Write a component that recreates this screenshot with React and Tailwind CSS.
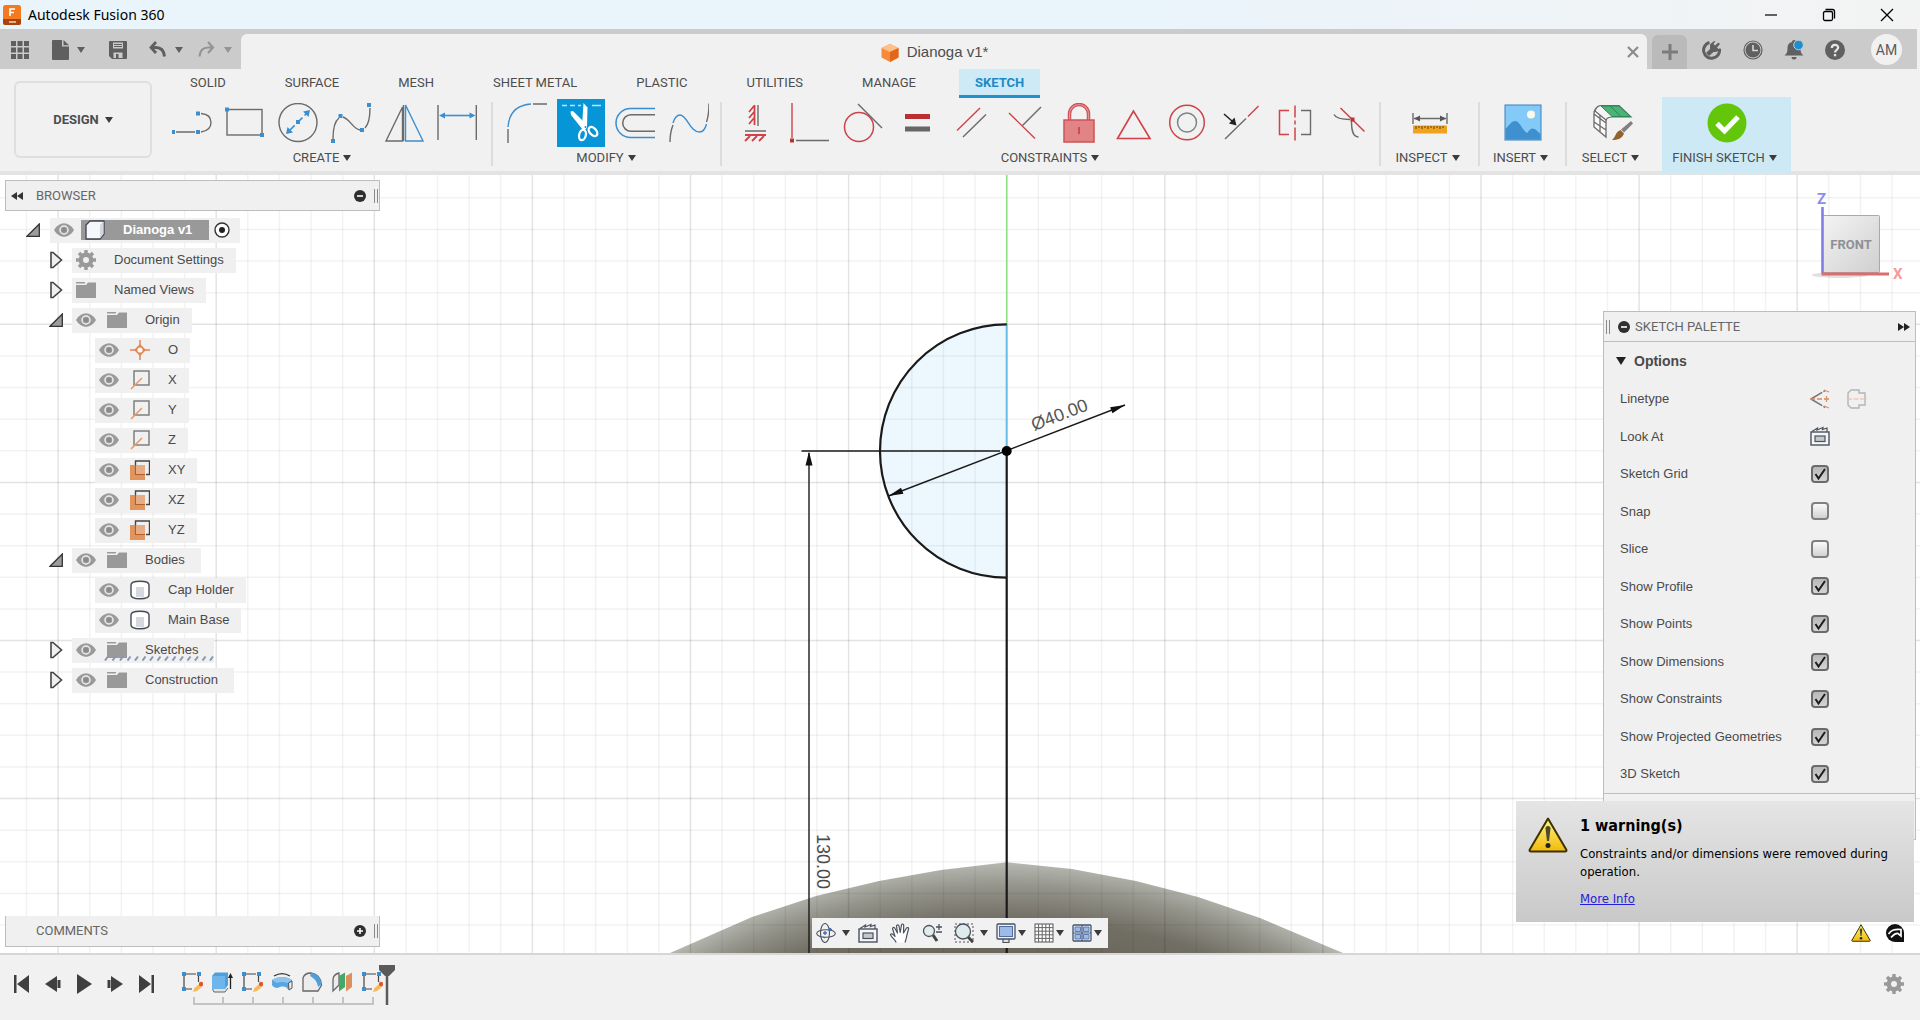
import { useState } from 'react'

const BLUE = '#3b8fd0'
const GREY = '#6b6b6b'
const RED = '#cf4248'

function Caret({ className = 'text-[#3c3c3c]' }) {
  return (
    <svg className={`w-2 h-1.5 shrink-0 ${className}`} viewBox="0 0 8 6" fill="currentColor" aria-hidden="true">
      <path d="M0 0h8L4 6z" />
    </svg>
  )
}

function Icon({ size = 'w-10 h-10', box = '0 0 40 40', children }) {
  return (
    <svg className={`${size} shrink-0`} viewBox={box} fill="none" aria-hidden="true">
      {children}
    </svg>
  )
}

function Dots({ points, size = 4 }) {
  return points.map(([x, y]) => (
    <rect key={`${x}-${y}`} x={x - size / 2} y={y - size / 2} width={size} height={size} fill={BLUE} />
  ))
}

// ========================
//  Ribbon tools
// ========================

const CREATE_TOOLS = [
  {
    name: 'Line',
    icon: (
      <>
        <path d="M4 29h19M29 29c7-1 10-5 10-9.500S36 11 29 10.500" stroke={GREY} strokeWidth="1.400" />
        <Dots points={[[1, 29], [26, 29], [26, 10.5]]} />
      </>
    ),
  },
  {
    name: 'Rectangle',
    icon: (
      <>
        <rect x="2" y="6.500" width="35" height="25.500" stroke={GREY} strokeWidth="1.400" />
        <Dots points={[[2, 6.5], [37, 32]]} />
      </>
    ),
  },
  {
    name: 'Circle',
    icon: (
      <>
        <circle cx="20" cy="19.500" r="19" stroke={GREY} strokeWidth="1.400" />
        <path d="M11 28L29 10" stroke={BLUE} strokeWidth="1.600" strokeDasharray="8 3" />
        <path d="M8 31l1.500-7 5.500 5.500zM32 7l-1.500 7-5.500-5.500z" fill={BLUE} />
        <Dots points={[[20, 19]]} />
      </>
    ),
  },
  {
    name: 'Spline',
    icon: (
      <>
        <path d="M2 36c0-10 2-18 6-21M12 14c8 3 9 11 17 13M34 25c4-4 5-12 5-20" stroke={GREY} strokeWidth="1.400" />
        <Dots points={[[2, 38], [9.5, 13], [31, 27], [38, 2]]} />
      </>
    ),
  },
  {
    name: 'Mirror',
    icon: (
      <>
        <path d="M2 38L18.500 4v34zM19.500 2v36" stroke={GREY} strokeWidth="1.400" />
        <path d="M21.500 2v36H39z" stroke={BLUE} strokeWidth="1.400" />
      </>
    ),
  },
  {
    name: 'Sketch Dimension',
    icon: (
      <>
        <path d="M1 2v35M39.300 2v35" stroke={GREY} strokeWidth="1.400" />
        <path d="M5 12.500h30" stroke={BLUE} strokeWidth="1.600" />
        <path d="M2 12.500l6-3v6zM38.500 12.500l-6-3v6z" fill={BLUE} />
      </>
    ),
  },
]

const MODIFY_TOOLS = [
  {
    name: 'Fillet',
    icon: (
      <>
        <path d="M1 26v14M26 1h14" stroke={GREY} strokeWidth="1.400" />
        <path d="M1 24C2 10 10 2 24 1" stroke={BLUE} strokeWidth="1.400" />
      </>
    ),
  },
  {
    name: 'Trim',
    active: true,
    icon: (
      <>
        <path d="M1 2.500h5M9 2.500h5M17 2.500h3M31 2.500h10" stroke="#bfe3f7" strokeWidth="1.400" />
        <path d="M9.500 8.500l2.500-.5 14 14-1 4-3 1L10 12z" fill="#fff" />
        <path d="M22.500 0l4 4.500-.5 20-2.500 2-2.500-3z" fill="#fff" />
        <ellipse cx="21.500" cy="32" rx="3.300" ry="5.300" transform="rotate(14 21.500 32)" stroke="#fff" strokeWidth="2.300" />
        <ellipse cx="32" cy="28.500" rx="3.300" ry="5.300" transform="rotate(-42 32 28.500)" stroke="#fff" strokeWidth="2.300" />
        <circle cx="24.500" cy="24" r="1" fill="#0696d7" />
      </>
    ),
  },
  {
    name: 'Offset',
    icon: (
      <>
        <path d="M40 5.500H15.500a14.500 14.500 0 000 29H40" stroke={BLUE} strokeWidth="1.500" />
        <path d="M40 11.700H16a8.300 8.300 0 000 16.600H40" stroke={GREY} strokeWidth="1.500" />
      </>
    ),
  },
  {
    name: 'Blend Curve',
    icon: (
      <>
        <path d="M1 39c0-6 1-12 3-17M37.500 19c2-6 2.500-12 2.500-18.500" stroke={GREY} strokeWidth="1.400" />
        <path d="M4 20c1.500-5 4-8 7-8 7 0 10 17 19.500 17 3.500 0 6-4 7-8" stroke={BLUE} strokeWidth="1.400" />
      </>
    ),
  },
]

const CONSTRAINT_TOOLS = [
  {
    name: 'Horizontal/Vertical',
    icon: (
      <>
        <path d="M19.500 2v20M14 9l5-6M14 15l5-6M14 21l5-6M10 32h21M10 38l5-5M17 38l5-5M24 38l5-5" stroke={RED} strokeWidth="1.800" />
        <path d="M23 2v21M10 28h21" stroke={GREY} strokeWidth="1.400" />
      </>
    ),
  },
  {
    name: 'Coincident',
    icon: (
      <>
        <path d="M3 0v35" stroke={RED} strokeWidth="1.400" />
        <path d="M7 37.500h34" stroke={GREY} strokeWidth="1.400" />
        <rect x="1" y="35.500" width="4" height="4" fill="#b8343a" />
      </>
    ),
  },
  {
    name: 'Tangent',
    icon: (
      <>
        <circle cx="16" cy="24" r="14.500" stroke={RED} strokeWidth="1.500" />
        <path d="M15 1l24 24" stroke={GREY} strokeWidth="1.400" />
      </>
    ),
  },
  {
    name: 'Equal',
    icon: (
      <>
        <path d="M8 13.500h25" stroke="#b92f34" strokeWidth="5" />
        <path d="M8 26h25" stroke="#666" strokeWidth="5" />
      </>
    ),
  },
  {
    name: 'Parallel',
    icon: (
      <>
        <path d="M6 27.500L29 5" stroke={RED} strokeWidth="1.400" />
        <path d="M12 34l23-22.500" stroke={GREY} strokeWidth="1.400" />
      </>
    ),
  },
  {
    name: 'Perpendicular',
    icon: (
      <>
        <path d="M4 10l26 25.500" stroke={RED} strokeWidth="1.400" />
        <path d="M17.500 22.500L36 4" stroke={GREY} strokeWidth="1.400" />
      </>
    ),
  },
  {
    name: 'Fix/Unfix',
    icon: (
      <>
        <path d="M10.500 17V11a9.500 9.500 0 0119 0v6" stroke="#cf5156" strokeWidth="3.500" />
        <path d="M10.500 17V11a9.500 9.500 0 0119 0v6" stroke="#e59496" strokeWidth="1.200" />
        <rect x="5" y="17" width="30" height="22" fill="#e28486" stroke="#cf5156" strokeWidth="1.500" />
        <path d="M20 24v7" stroke="#b8343a" strokeWidth="1.300" />
      </>
    ),
  },
  {
    name: 'Midpoint',
    icon: <path d="M20.500 8L4.500 35.500h32.500z" stroke={RED} strokeWidth="1.600" />,
  },
  {
    name: 'Concentric',
    icon: (
      <>
        <circle cx="20" cy="19.500" r="17.300" stroke={RED} strokeWidth="1.500" />
        <circle cx="20" cy="19.500" r="9.500" stroke="#7c8583" strokeWidth="1.500" />
      </>
    ),
  },
  {
    name: 'Collinear',
    icon: (
      <>
        <path d="M4 36l21-20.500" stroke={GREY} strokeWidth="1.400" />
        <path d="M27 13.500L37.500 3" stroke={RED} strokeWidth="1.400" />
        <path d="M3 11l8 7" stroke="#222" strokeWidth="1.500" />
        <path d="M15.500 22.500l-7.500-2 5.500-6z" fill="#222" />
      </>
    ),
  },
  {
    name: 'Symmetry',
    icon: (
      <>
        <path d="M14 7.500H4.500v24H14M20 2.500v12M20 17.500v4M20 24.500v13" stroke={RED} strokeWidth="1.500" />
        <path d="M26 7.500h9.500v24H26" stroke={GREY} strokeWidth="1.400" />
      </>
    ),
  },
  {
    name: 'Curvature',
    icon: (
      <>
        <path d="M5 11.500c2 4 7 5 16 5M22.500 18c0 9 1 16 7 16" stroke={GREY} strokeWidth="1.400" />
        <path d="M11.500 5l24 23.500" stroke={RED} strokeWidth="1.500" />
        <rect x="21.500" y="14.500" width="4" height="4" fill="#b8343a" />
      </>
    ),
  },
]

function ToolGroup({ label, tools, cell }) {
  return (
    <div className="flex flex-col items-center pt-px">
      <div className="flex">
        {tools.map((tool) => (
          <div key={tool.name} className={`${cell} h-12 flex justify-center`}>
            <button
              aria-label={tool.name}
              className={`w-12 h-12 flex items-center justify-center ${tool.active ? 'bg-[#0696d7]' : ''}`}
            >
              <Icon>{tool.icon}</Icon>
            </button>
          </div>
        ))}
      </div>
      <GroupLabel>{label}</GroupLabel>
    </div>
  )
}

function GroupLabel({ children }) {
  return (
    <button className="flex items-center gap-1 h-[22px] pr-1 text-[13px] leading-5 whitespace-nowrap">
      {children}
      <Caret />
    </button>
  )
}

function SingleGroup({ label, width, icon }) {
  return (
    <div className={`${width} flex flex-col items-center pt-px`}>
      <button aria-label={label} className="w-12 h-12 flex items-center justify-center">
        <Icon>{icon}</Icon>
      </button>
      <GroupLabel>{label}</GroupLabel>
    </div>
  )
}

function Divider() {
  return <div className="w-0.5 h-16 mt-1 bg-[#dcdcdc] shrink-0" />
}

const RIBBON_TABS = ['SOLID', 'SURFACE', 'MESH', 'SHEET METAL', 'PLASTIC', 'UTILITIES', 'MANAGE', 'SKETCH']

function Ribbon() {
  return (
    <div className="flex bg-[#f1f1f1] border-b-4 border-[#e3e3e3] text-[#4d4d4d] font-['Roboto',sans-serif]">
      <button className="w-[138px] h-[77px] mt-3 ml-3.5 mr-[13px] flex items-center justify-center gap-1.5 border-2 border-[#dfdfdf] rounded-md text-[13px] font-bold shrink-0">
        DESIGN
        <Caret />
      </button>
      <div className="flex flex-col">
        <nav className="flex gap-[27px] pl-[9px] h-[29px]">
          {RIBBON_TABS.map((tab) => (
            <button
              key={tab}
              className={`px-4 text-[13px] whitespace-nowrap ${
                tab === 'SKETCH' ? 'bg-[#cdeaf6] text-[#1b8ac6] font-bold border-b-[3px] border-[#1f93cb] pt-0.5' : 'pb-0.5'
              }`}
            >
              {tab}
            </button>
          ))}
        </nav>
        <div className="flex h-[73px]">
          <ToolGroup label="CREATE" tools={CREATE_TOOLS} cell="w-[53px]" />
          <div className="w-2" />
          <Divider />
          <div className="w-[7px]" />
          <ToolGroup label="MODIFY" tools={MODIFY_TOOLS} cell="w-[54px]" />
          <div className="w-1" />
          <Divider />
          <div className="w-[6px]" />
          <ToolGroup label="CONSTRAINTS" tools={CONSTRAINT_TOOLS} cell="w-[54px]" />
          <div className="w-[3px]" />
          <Divider />
          <SingleGroup
            label="INSPECT"
            width="w-[97px]"
            icon={
              <>
                <path d="M3 10v11M37 10v11M4 15.500h32" stroke={GREY} strokeWidth="1.400" />
                <path d="M4 15.500l6-3v6zM36 15.500l-6-3v6z" fill="#555" />
                <rect x="3" y="22.500" width="34" height="8" fill="#f0a31f" />
                <path d="M6 23v3M9 23v2M12 23v3M15 23v2M18 23v3M21 23v2M24 23v3M27 23v2M30 23v3M33 23v2" stroke="#5b4014" />
              </>
            }
          />
          <Divider />
          <SingleGroup
            label="INSERT"
            width="w-[85px]"
            icon={
              <>
                <rect x="2" y="2" width="36" height="35" fill="#84caf8" stroke="#3a82b8" />
                <path d="M2.500 26c4-4 6-8 9.500-8 5 0 7 9 12 12 2-2 3-4.500 5.500-4.500 3 0 5 3 8 5.500v5.500h-35z" fill="#3f90cf" />
                <circle cx="28" cy="11.500" r="4" fill="#fdfbe8" />
              </>
            }
          />
          <Divider />
          <SingleGroup
            label="SELECT"
            width="w-[91px]"
            icon={
              <>
                <path d="M1 11v13l12 10V17c0-3 2-4 5-4L8 3C4 3 1 6 1 11zM1 11l12 9M1 19l12 8M7 7v22" stroke={GREY} strokeWidth="1.300" fill="#fafafa" />
                <path d="M8 2.500h18L38 14H19c-3 0-5 1-6 3L2 8c1-3 3-5 6-5.500z" fill="#f4f4f4" stroke={GREY} strokeWidth="1.200" />
                <path d="M8 3h18l11.500 10.500H19z" fill="#4cb378" stroke="#2c8655" />
                <path d="M17 3l11 10.500" stroke="#2c8655" />
                <path d="M38 18l2 2.500-9 9-3-3z" fill="#808080" />
                <path d="M27.500 27l3.500 3.500c-2 5-6 6.500-12 6.500 4-3 3-8 8.500-10z" fill="#94602f" />
              </>
            }
          />
          <div className="ml-1 -mt-px h-[76px] w-[129px] pt-0.5 flex flex-col items-center bg-[#cde9f5]">
            <button aria-label="FINISH SKETCH" className="w-12 h-12 flex items-center justify-center">
              <Icon>
                <circle cx="20" cy="20" r="19.500" fill="#63c60b" />
                <path d="M10 20.500l7.500 7.500L31 14" stroke="#fff" strokeWidth="5" />
              </Icon>
            </button>
            <GroupLabel>FINISH SKETCH</GroupLabel>
          </div>
        </div>
      </div>
    </div>
  )
}

// ========================
//  Window chrome
// ========================

function TitleBar() {
  return (
    <header className="flex items-center justify-between h-[29px] pl-[3px] pr-2.5 bg-linear-to-r from-[#eaf4fb] from-60% to-[#f3f3f3] text-[14px] text-black font-['Noto_Sans',sans-serif]">
      <div className="flex items-center gap-[7px]">
        <Icon size="w-[18px] h-5" box="0 0 18 20">
          <rect width="18" height="20" rx="2.500" fill="#f37a1f" />
          <path d="M0 14h18v3.500a2.500 2.500 0 01-2.500 2.500h-13A2.500 2.500 0 010 17.500z" fill="#a8450f" />
          <path d="M7 11V4h5M7 7.500h4" stroke="#fff" strokeWidth="1.600" />
          <path d="M6 17h7" stroke="#f5d5c0" strokeWidth="1.500" />
        </Icon>
        <span>Autodesk Fusion 360</span>
      </div>
      <div className="flex gap-3">
        <button aria-label="Minimize" className="w-[46px] flex justify-center">
          <Icon size="w-3.5 h-3.5" box="0 0 14 14"><path d="M1 7h12" stroke="#000" strokeWidth="1.200" /></Icon>
        </button>
        <button aria-label="Restore" className="w-[46px] flex justify-center">
          <Icon size="w-3.5 h-3.5" box="0 0 14 14">
            <path d="M3.500 1.500h7a2 2 0 012 2v7" stroke="#000" strokeWidth="1.300" />
            <rect x="1.500" y="3.500" width="9" height="9" rx="1.500" stroke="#000" strokeWidth="1.300" />
          </Icon>
        </button>
        <button aria-label="Close" className="w-[46px] flex justify-center">
          <Icon size="w-3.5 h-3.5" box="0 0 14 14"><path d="M1 1l12 12M13 1L1 13" stroke="#000" strokeWidth="1.300" /></Icon>
        </button>
      </div>
    </header>
  )
}

function DocumentBar() {
  return (
    <div className="flex items-end h-10 mr-[3px] bg-[#cbcbcb]">
      <div className="w-[241px] h-[39px] flex items-center pl-[11px] shrink-0">
        <button aria-label="Data panel">
          <Icon size="w-[18px] h-[18px]" box="0 0 18 18">
            {[0, 6.5, 13].map((y) => [0, 6.5, 13].map((x) => <rect key={`${x}${y}`} x={x} y={y} width="5" height="5" fill="#5f5f5f" />))}
          </Icon>
        </button>
        <button aria-label="File" className="ml-[23px] flex items-center gap-2">
          <Icon size="w-[17px] h-5" box="0 0 17 20">
            <path d="M0 1a1 1 0 011-1h9v6.500h7V19a1 1 0 01-1 1H1a1 1 0 01-1-1z" fill="#5f5f5f" />
            <path d="M11.500 0L17 5.300h-5.500z" fill="#5f5f5f" />
          </Icon>
          <Caret className="text-[#5f5f5f]" />
        </button>
        <button aria-label="Save" className="ml-6">
          <Icon size="w-[18px] h-[18px]" box="0 0 18 18">
            <path d="M0 1a1 1 0 011-1h16a1 1 0 011 1v16a1 1 0 01-1 1H3l-3-3z" fill="#5f5f5f" />
            <path d="M4 1.500h10v6H4zM4.500 11.500h9V17h-9z" fill="#cbcbcb" />
            <path d="M5 3.500h8M5 5.500h8" stroke="#5f5f5f" />
            <rect x="7" y="13" width="2.500" height="4" fill="#5f5f5f" />
          </Icon>
        </button>
        <button aria-label="Undo" className="ml-[22px] flex items-center gap-[9px]">
          <Icon size="w-[17px] h-[17px]" box="0 0 17 17">
            <path d="M7 1L2 6.500 7 12M2.500 6.500H7c5.500 0 8 3.500 8.500 9" stroke="#5f5f5f" strokeWidth="2.800" />
          </Icon>
          <Caret className="text-[#5f5f5f]" />
        </button>
        <button aria-label="Redo" className="ml-[15px] flex items-center gap-[9px]">
          <Icon size="w-[17px] h-[17px]" box="0 0 17 17">
            <path d="M10 1l5 5.500-5 5.500M14.500 6.500H10C4.500 6.500 2 10 1.500 15.500" stroke="#949494" strokeWidth="2.200" />
          </Icon>
          <Caret className="text-[#949494]" />
        </button>
      </div>
      <div className="flex-1 h-[35px] flex items-center bg-[#f1f1f1] rounded-t-md pr-[7px]">
        <div className="flex-1 flex items-center justify-center gap-2 pl-0.5 pt-0.5 text-[15px] text-[#4d4d4d] font-['Liberation_Sans',sans-serif]">
          <Icon size="w-[18px] h-[18px]" box="0 0 18 18">
            <path d="M9 0l8.500 4v9.500L9 18 .5 13.500V4z" fill="#f58a3a" />
            <path d="M9 0l8.500 4L9 8 .5 4z" fill="#ffc08a" />
            <path d="M9 8l8.500-4v9.500L9 18z" fill="#e2671b" />
          </Icon>
          Dianoga v1*
        </div>
        <button aria-label="Close tab" className="w-3.5">
          <Icon size="w-3.5 h-3.5" box="0 0 14 14"><path d="M2 2l10 10M12 2L2 12" stroke="#8b8b8b" strokeWidth="2.200" /></Icon>
        </button>
      </div>
      <button aria-label="New design" className="ml-[5px] w-[35px] h-[34px] flex items-center justify-center bg-[#bababa] rounded-t-md">
        <Icon size="w-4 h-4" box="0 0 16 16"><path d="M8 0v16M0 8h16" stroke="#7c7c7c" strokeWidth="3" /></Icon>
      </button>
      <div className="h-[39px] flex items-center gap-[21px] pl-[15px] pr-[15px]">
        <button aria-label="Extensions">
          <Icon size="w-5 h-5" box="0 0 20 20">
            <path d="M7.500 2.500A8 8 0 1017.500 9" stroke="#606060" strokeWidth="3" />
            <path d="M8 5c1-2 3.500-4 5.500-4l-2 3 1.500 1.500 3.500-3L18 4l-3 3.500L16.500 9l2-1c-1 3-4 4.500-7 4L7 16l-3-3 4-4z" fill="#606060" />
          </Icon>
        </button>
        <button aria-label="Job status">
          <Icon size="w-5 h-5" box="0 0 20 20">
            <circle cx="10" cy="10" r="9" stroke="#606060" strokeWidth="1.200" />
            <circle cx="10" cy="10" r="7.500" fill="#606060" />
            <path d="M10 5v5.500h5" stroke="#d6d6d6" strokeWidth="1.600" />
          </Icon>
        </button>
        <button aria-label="Notifications">
          <Icon size="w-5 h-5" box="0 0 20 20">
            <path d="M10 0a2 2 0 012 2c4 1 4.500 4 4.500 7 0 4 1.500 5 3 6.500H.5C2 14 3.500 13 3.500 9c0-3 .5-6 4.500-7a2 2 0 012-2z" fill="#606060" />
            <path d="M7.500 17h5a2.500 2.500 0 01-5 0z" fill="#606060" />
            <circle cx="14.500" cy="5" r="4.800" fill="#1c8fd1" stroke="#cbcbcb" />
          </Icon>
        </button>
        <button aria-label="Help">
          <Icon size="w-5 h-5" box="0 0 20 20">
            <circle cx="10" cy="10" r="10" fill="#606060" />
            <path d="M6.800 8c0-4 6.400-4 6.400-.5 0 2.300-3.200 2.300-3.200 5" stroke="#e6e6e6" strokeWidth="2.200" />
            <rect x="8.900" y="14" width="2.300" height="2.300" fill="#e6e6e6" />
          </Icon>
        </button>
        <button className="w-[31px] h-[31px] ml-[5px] rounded-full bg-[#f1f1f1] text-[14px] leading-none text-[#5c5c5c] font-['Roboto',sans-serif]">
          AM
        </button>
      </div>
    </div>
  )
}

// ========================
//  Browser tree
// ========================

function Eye() {
  return (
    <button aria-label="Toggle visibility">
      <Icon size="w-5 h-3.5" box="0 0 20 14">
        <path d="M0 7c5-9 15-9 20 0-5 9-15 9-20 0z" fill="#9a9a9a" />
        <circle cx="10" cy="7" r="4" stroke="#ececec" strokeWidth="1.500" />
        <circle cx="10" cy="7" r="2.300" fill="#8a8a8a" />
      </Icon>
    </button>
  )
}

function Expander({ open }) {
  return (
    <button aria-label={open ? 'Collapse' : 'Expand'} className="w-3.5">
      {open ? (
        <Icon size="w-3.5 h-3.5" box="0 0 14 14"><path d="M1 13.300L13.300 1v12.300z" fill="#9c9c9c" stroke="#333" strokeWidth="1.300" /></Icon>
      ) : (
        <Icon size="w-3.5 h-[18px]" box="0 0 14 18"><path d="M2 1.500h2L12.500 9 4 16.500H2z" fill="#efefef" stroke="#444" strokeWidth="1.600" /></Icon>
      )}
    </button>
  )
}

const TREE_ICONS = {
  gear: (
    <>
      <circle cx="10" cy="10" r="5.200" stroke="#999" strokeWidth="4.400" />
      <path d="M10 0v4M10 16v4M0 10h4M16 10h4M3 3l2.800 2.800M14.200 14.200L17 17M17 3l-2.800 2.800M5.800 14.200L3 17" stroke="#999" strokeWidth="3.400" />
    </>
  ),
  folder: <path d="M0 2h9v1.500H0zM0 5h10l2-2.500h8V18H0z" fill="#999" />,
  origin: (
    <>
      <path d="M10 0v20M0 10h20" stroke="#e0874f" strokeWidth="1.500" />
      <path d="M10 4l2 2 4 4-4 4-2 2-6-6 4-4z" fill="#e0874f" />
      <circle cx="10" cy="10" r="2.600" fill="#fdf6f0" />
    </>
  ),
  axis: (
    <>
      <rect x="4" y="1" width="15" height="14" stroke="#777" strokeWidth="1.400" />
      <path d="M1 19L12 8" stroke="#e39a6b" strokeWidth="1.600" />
    </>
  ),
  plane: (
    <>
      <path d="M5.500 14V1H19.500v13.500H16" stroke="#444" strokeWidth="1.400" />
      <rect x="0" y="5" width="15" height="15" fill="#e0955f" />
      <path d="M5.500 5v9.500H15" stroke="#b05f2b" strokeWidth="1.200" />
      <rect x="6" y="5" width="9" height="9" fill="#e6ad85" />
    </>
  ),
  body: (
    <>
      <path d="M1 5c0-5 18-5 18 0v10c0 5-18 5-18 0z" fill="#fff" stroke="#454b55" strokeWidth="1.400" />
      <rect x="6" y="7" width="8" height="10" fill="#d5d8de" />
    </>
  ),
}

const TREE = [
  { label: 'Document Settings', level: 1, icon: 'gear', expander: 'closed', noEye: true },
  { label: 'Named Views', level: 1, icon: 'folder', expander: 'closed', noEye: true },
  { label: 'Origin', level: 1, icon: 'folder', expander: 'open' },
  { label: 'O', level: 2, icon: 'origin' },
  { label: 'X', level: 2, icon: 'axis' },
  { label: 'Y', level: 2, icon: 'axis' },
  { label: 'Z', level: 2, icon: 'axis' },
  { label: 'XY', level: 2, icon: 'plane' },
  { label: 'XZ', level: 2, icon: 'plane' },
  { label: 'YZ', level: 2, icon: 'plane' },
  { label: 'Bodies', level: 1, icon: 'folder', expander: 'open', wide: true },
  { label: 'Cap Holder', level: 2, icon: 'body' },
  { label: 'Main Base', level: 2, icon: 'body' },
  { label: 'Sketches', level: 1, icon: 'folder', expander: 'closed', wide: true, hatched: true },
  { label: 'Construction', level: 1, icon: 'folder', expander: 'closed', wide: true },
]

function TreeRow({ item }) {
  return (
    <li className={`flex items-center h-[30px] ${item.level === 2 ? 'pl-[90px]' : 'pl-11'}`}>
      {item.expander && (
        <span className="w-[23px] flex">
          <Expander open={item.expander === 'open'} />
        </span>
      )}
      <div className={`relative flex items-center h-[25px] bg-[#f0f0f0] pl-1 ${item.wide ? 'pr-4' : 'pr-3'}`}>
        {!item.noEye && (
          <span className="mr-[11px] flex">
            <Eye />
          </span>
        )}
        <Icon size="w-5 h-5" box="0 0 20 20">{TREE_ICONS[item.icon]}</Icon>
        <span className="ml-[18px]">{item.label}</span>
        {item.hatched && (
          <svg className="absolute left-8 bottom-0.5 h-1.5 w-[112px]" viewBox="0 0 112 6" aria-hidden="true">
            {Array.from({ length: 15 }, (_, i) => (
              <path key={i} d={`M${i * 7.5 + 1} 5.500l3-4`} stroke="#8497b5" strokeWidth="2" />
            ))}
          </svg>
        )}
      </div>
    </li>
  )
}

function PanelGrip() {
  return <span className="w-1 h-3.5 border-x border-[#8a8a8a]" />
}

function RoundSign({ plus }) {
  return (
    <Icon size="w-3 h-3" box="0 0 12 12">
      <circle cx="6" cy="6" r="6" fill="#2f2f2f" />
      <path d={plus ? 'M3 6h6M6 3v6' : 'M3 6h6'} stroke="#fff" strokeWidth="1.600" />
    </Icon>
  )
}

function Browser() {
  return (
    <aside className="text-[13px] text-[#4a4a4a] font-['Liberation_Sans',sans-serif]">
      <div className="flex items-center h-[31px] pl-[5px] pr-px border border-[#bdbdbd] bg-[#f0f0f0]">
        <button aria-label="Collapse browser">
          <Icon size="w-3 h-2" box="0 0 12 8"><path d="M6 0v8L0 4zM12 0v8L6 4z" fill="#333" /></Icon>
        </button>
        <h2 className="flex-1 ml-[13px] text-[13px] text-[#666] font-['Roboto',sans-serif]">BROWSER</h2>
        <button aria-label="Hide browser" className="mr-2"><RoundSign /></button>
        <PanelGrip />
      </div>
      <ul className="pt-1">
        <li className="flex items-center h-[30px] pl-[21px]">
          <span className="w-6 flex"><Expander open /></span>
          <div className="flex items-center h-[25px] bg-[#f0f0f0] pl-1 pr-2.5">
            <Eye />
            <span className="ml-[7px] h-5 w-[128px] pl-1 flex items-center gap-[18px] bg-[#999] text-white font-bold">
              <Icon size="w-5 h-5" box="0 0 20 20">
                <path d="M1 5l4-4h14v13l-4 5H1z" fill="#f6f7f9" stroke="#3e4550" strokeWidth="1.300" strokeLinejoin="round" />
                <path d="M15 5l3.500-3.500V14L15 18.500z" fill="#d3d6dc" />
              </Icon>
              Dianoga v1
            </span>
            <button aria-label="Activate component" className="ml-[5px]">
              <Icon size="w-4 h-4" box="0 0 16 16">
                <circle cx="8" cy="8" r="7" fill="#fff" stroke="#333" strokeWidth="1.400" />
                <circle cx="8" cy="8" r="3" fill="#222" />
              </Icon>
            </button>
          </div>
        </li>
        {TREE.map((item) => <TreeRow key={item.label} item={item} />)}
      </ul>
    </aside>
  )
}

function Comments() {
  return (
    <div className="flex items-center h-[31px] pl-[30px] pr-px border border-t-0 border-[#bdbdbd] bg-[#f0f0f0]">
      <h2 className="flex-1 text-[13px] text-[#666] font-['Roboto',sans-serif]">COMMENTS</h2>
      <button aria-label="Show comments" className="mr-2"><RoundSign plus /></button>
      <PanelGrip />
    </div>
  )
}

// ========================
//  Viewport
// ========================

const STEP = 31.62
const CX = 1006.7
const TOP = 324.3

function Sketch() {
  const columns = Array.from({ length: 62 }, (_, i) => i - 32)
  const rows = Array.from({ length: 26 }, (_, i) => i - 4)
  return (
    <svg
      className="absolute inset-0 w-full h-full bg-white"
      viewBox="0 175 1920 778"
      preserveAspectRatio="xMidYMin slice"
      fill="none"
      aria-label="Sketch canvas"
    >
      <defs>
        <radialGradient id="dome" gradientUnits="userSpaceOnUse" cx="1006" cy="1534" r="672">
          <stop offset="0.870" stopColor="#6b675c" />
          <stop offset="0.915" stopColor="#716e64" />
          <stop offset="0.965" stopColor="#95958c" />
          <stop offset="1" stopColor="#b7b9b2" />
        </radialGradient>
      </defs>

      <path d="M670 953L752 917 816 896 879 881 941 870 1006.700 862.300 1072 869 1136 881 1198 897 1260 918 1343 953z" fill="url(#dome)" />
      <path d={`M${CX} 324.300a126.700 126.700 0 000 253.400z`} fill="#edf7fe" />

      {columns.map((i) => (
        <path key={`c${i}`} d={`M${CX + i * STEP} 175V953`} stroke="#000" strokeOpacity={i % 5 === 0 ? 0.11 : 0.05} strokeWidth="1.500" />
      ))}
      {rows.map((i) => (
        <path key={`r${i}`} d={`M0 ${TOP + i * STEP}H1920`} stroke="#000" strokeOpacity={i % 5 === 0 ? 0.11 : 0.05} strokeWidth="1.500" />
      ))}

      <path d={`M${CX} 175V324`} stroke="#8ee085" strokeWidth="1.500" />
      <path d={`M${CX} 324V451`} stroke="#67bfe4" strokeWidth="2" />
      <path d={`M${CX} 324.300a126.700 126.700 0 000 253.400`} stroke="#1a1a1a" strokeWidth="2.200" />
      <path d={`M${CX} 451V953`} stroke="#1a1a1a" strokeWidth="2.200" />

      {/* linear dimension */}
      <path d="M801.500 451H1000M809 453V953" stroke="#1a1a1a" strokeWidth="1.400" />
      <path d="M809 451.500l3.500 14h-7z" fill="#111" />
      <text x="817" y="834" transform="rotate(90 817 834)" className="text-[18px] font-['Liberation_Sans',sans-serif]" fill="#4a4a4a">130.00</text>

      {/* diameter dimension */}
      <path d="M888.500 496L1125 405" stroke="#1a1a1a" strokeWidth="1.400" />
      <path d="M888.500 496l12.500-8.300 2.400 6zM1125 405l-12.500 8.300-2.400-6z" fill="#111" />
      <text x="1034" y="431" transform="rotate(-21 1034 431)" className="text-[18px] font-['Liberation_Sans',sans-serif]" fill="#555">Ø40.00</text>

      <circle cx={CX} cy="451" r="5" fill="#000" />
    </svg>
  )
}

function ViewCube() {
  return (
    <button aria-label="View cube" className="w-[100px] h-[100px]">
      <svg className="w-[100px] h-[100px]" viewBox="0 0 100 100" fill="none">
        <defs>
          <linearGradient id="face" x1="0" y1="0" x2="1" y2="1">
            <stop stopColor="#f4f4f4" />
            <stop offset="1" stopColor="#cfcfcf" />
          </linearGradient>
        </defs>
        <ellipse cx="35" cy="90" rx="28" ry="3" fill="#000" fillOpacity="0.120" />
        <rect x="17.500" y="30.500" width="57" height="57" rx="1" fill="url(#face)" stroke="#a9a9a9" />
        <path d="M17.500 22v66" stroke="#7d7be0" strokeWidth="2.500" />
        <path d="M16.500 89H84" stroke="#e06b6b" strokeWidth="3" />
        <text x="12" y="19" className="text-[15px] font-bold font-['Roboto',sans-serif]" fill="#8f8cec">Z</text>
        <text x="88" y="94" className="text-[15px] font-bold font-['Roboto',sans-serif]" fill="#f59a9a">X</text>
        <text x="46" y="64" textAnchor="middle" className="text-[13px] font-bold font-['Roboto',sans-serif]" fill="#8e9094">FRONT</text>
      </svg>
    </button>
  )
}

const OPTIONS = [
  ['Sketch Grid', true],
  ['Snap', false],
  ['Slice', false],
  ['Show Profile', true],
  ['Show Points', true],
  ['Show Dimensions', true],
  ['Show Constraints', true],
  ['Show Projected Geometries', true],
  ['3D Sketch', true],
]

function OptionRow({ label, initial }) {
  const [checked, setChecked] = useState(initial)
  return (
    <label className="flex items-center">
      <span className="w-[191px]">{label}</span>
      <span className="relative flex w-[18px] h-[18px]">
        <input
          type="checkbox"
          checked={checked}
          onChange={(e) => setChecked(e.target.checked)}
          className="appearance-none w-[18px] h-[18px] border-2 border-[#808080] rounded bg-linear-to-b from-[#fafafa] to-[#d2d2d2] checked:from-[#b8b8b8] checked:to-[#d4d4d4] checked:border-[#6b6b6b]"
        />
        {checked && (
          <svg className="absolute inset-0 pointer-events-none" viewBox="0 0 18 18" fill="none" aria-hidden="true">
            <path d="M4.500 9l3 4.500L14 4" stroke="#1c1c1c" strokeWidth="2" />
          </svg>
        )}
      </span>
    </label>
  )
}

function LookIcon({ size }) {
  return (
    <Icon size={size} box="0 0 20 20">
      <path d="M2 5.500L7.500 2 7 4l6-2.500-.5 2L17 2v4" stroke="#4a5260" strokeWidth="1.200" />
      <rect x="1" y="6" width="18" height="13" fill="#f6f6f6" stroke="#4a5260" strokeWidth="1.400" />
      <rect x="5" y="10" width="10" height="5.500" fill="#c3c8c8" stroke="#4a5260" strokeWidth="1.200" />
    </Icon>
  )
}

function SketchPalette() {
  return (
    <section className="w-[313px] h-[529px] border border-[#bdbdbd] bg-[#f0f0f0] text-[13px] text-[#4a4a4a] font-['Liberation_Sans',sans-serif]">
      <div className="flex items-center h-[30px] pl-0.5 pr-[5px] border-b border-[#bdbdbd]">
        <PanelGrip />
        <button aria-label="Minimize palette" className="ml-2"><RoundSign /></button>
        <h2 className="flex-1 ml-[5px] text-[13px] text-[#666] font-['Roboto',sans-serif]">SKETCH PALETTE</h2>
        <button aria-label="Dock palette">
          <Icon size="w-3 h-2" box="0 0 12 8"><path d="M0 0v8l6-4zM6 0v8l6-4z" fill="#222" /></Icon>
        </button>
      </div>
      <button className="flex items-center gap-2 h-[38px] pl-3 text-[14px] font-bold">
        <svg className="w-2.5 h-2" viewBox="0 0 10 8" fill="#222" aria-hidden="true"><path d="M0 0h10L5 8z" /></svg>
        Options
      </button>
      <div className="grid auto-rows-fr h-[414px] pl-4 border-b border-[#bdbdbd]">
        <div className="flex items-center">
          <span className="w-[190px]">Linetype</span>
          <button aria-label="Construction">
            <Icon size="w-5 h-5" box="0 0 20 20">
              <path d="M1 10L16 1M1 10l15 9" stroke="#777" strokeWidth="1.500" strokeDasharray="13 1.500 2 1" />
              <path d="M0 10h20" stroke="#e0875a" strokeWidth="1.300" strokeDasharray="5 2" />
              <path d="M14 1l5 2M14 17l5 2M16.500 7v6" stroke="#d8946f" strokeWidth="1.300" />
            </Icon>
          </button>
          <button aria-label="Centerline" className="ml-[17px]">
            <Icon size="w-5 h-5" box="0 0 20 20">
              <path d="M12 3V1H4L1 4v12l3 3h8v-3h6V4h-6z" stroke="#b4b4b4" strokeWidth="1.400" />
              <path d="M0 10h20" stroke="#e9b9a0" strokeDasharray="5 1.500" />
            </Icon>
          </button>
        </div>
        <div className="flex items-center">
          <span className="w-[190px]">Look At</span>
          <button aria-label="Look At"><LookIcon size="w-5 h-5" /></button>
        </div>
        {OPTIONS.map(([label, on]) => <OptionRow key={label} label={label} initial={on} />)}
      </div>
    </section>
  )
}

function WarningTriangle({ size }) {
  return (
    <Icon size={size} box="0 0 40 36">
      <defs>
        <linearGradient id="warn" x1="0" y1="0" x2="0" y2="1">
          <stop stopColor="#fdf67a" />
          <stop offset="1" stopColor="#f2b90c" />
        </linearGradient>
      </defs>
      <path d="M20 1.500L38.500 33a1.500 1.500 0 01-1.500 1.500H3A1.500 1.500 0 011.500 33z" fill="url(#warn)" stroke="#3b3205" strokeWidth="2" strokeLinejoin="round" />
      <path d="M17.500 11.500a2.500 2.500 0 015 0L21 24h-2z" fill="#4a4a32" />
      <circle cx="20" cy="28.500" r="2.500" fill="#222" />
    </Icon>
  )
}

function Notification() {
  return (
    <div
      role="alert"
      className="absolute right-1.5 bottom-[31px] w-[398px] h-[121px] flex gap-3 pl-3 pt-4 bg-linear-to-b from-[#e5e5e5] to-[#c9c9c9] text-black font-['DejaVu_Sans_Condensed','DejaVu_Sans',sans-serif]"
    >
      <WarningTriangle size="w-10 h-9" />
      <div>
        <h3 className="text-[16px] leading-[18px] font-bold">1 warning(s)</h3>
        <p className="mt-2.5 w-[324px] text-[13px] leading-[18px]">
          Constraints and/or dimensions were removed during operation.
        </p>
        <a href="#more-info" className="block mt-2 text-[13px] leading-5 text-[#2320d8] underline">More Info</a>
      </div>
    </div>
  )
}

const NAV_ITEMS = [
  {
    name: 'Orbit',
    menu: 'gap-1.5',
    icon: (
      <>
        <ellipse cx="10" cy="10.500" rx="9.300" ry="3.800" stroke="#4a5260" strokeWidth="1.100" />
        <ellipse cx="9" cy="10" rx="4.500" ry="9.500" stroke="#4a5260" strokeWidth="1.100" />
        <path d="M9 8v4M7 10h4M13 5l3 2M14.500 8V5M7 14l2 1" stroke="#3d6fb4" strokeWidth="1.300" />
      </>
    ),
  },
  { name: 'Look At', look: true },
  {
    name: 'Pan',
    icon: (
      <path
        d="M6 19.500c0-2.500-5-5-5.500-8 1-1.500 3 0 4.500 2L2.500 5.500C3 4 4.500 4 5 5.500L7.500 10 6.500 3c.3-1.500 2-1.500 2.500 0l1.200 6.500L11.500 2c.5-1.500 2-1.200 2.200.3L13.500 10l3-5c1-1 2.300-.3 2 1-.7 3-1.500 5-2 8-.3 2-1 3.500-1.500 5.500"
        fill="#fff"
        stroke="#4a5260"
        strokeWidth="1.200"
        strokeLinejoin="round"
      />
    ),
  },
  {
    name: 'Zoom',
    icon: (
      <>
        <path d="M11 12l4 6" stroke="#444" strokeWidth="3" />
        <circle cx="7" cy="8" r="5.500" fill="#e4eceb" stroke="#4a5260" strokeWidth="1.300" />
        <path d="M14 4h6M17 1v6M14 9h6" stroke="#4a5260" strokeWidth="1.300" />
      </>
    ),
  },
  {
    name: 'Fit',
    menu: 'gap-1.5',
    icon: (
      <>
        <rect x="1" y="1" width="18" height="18" stroke="#555" strokeDasharray="2 2" />
        <path d="M14 14l5 5" stroke="#444" strokeWidth="3" />
        <circle cx="9" cy="8.500" r="7.500" fill="#e0eceb" stroke="#4a5260" strokeWidth="1.300" />
      </>
    ),
  },
  {
    name: 'Display Settings',
    menu: 'gap-0.5',
    icon: (
      <>
        <path d="M7 15v4.500h6V15" fill="#e2e2e2" stroke="#4a5260" strokeWidth="1.200" />
        <rect x="1" y="1" width="18" height="15" rx="1" fill="#eef2f8" stroke="#4a5260" strokeWidth="1.300" />
        <rect x="3.500" y="3.500" width="13" height="10" fill="#9dbbe6" stroke="#4f6f9f" />
      </>
    ),
  },
  {
    name: 'Grid and Snaps',
    menu: 'gap-0.5',
    icon: (
      <>
        <rect x="1" y="1" width="18" height="18" fill="#fff" stroke="#555" />
        <path d="M4.600 1v18M8.200 1v18M11.800 1v18M15.400 1v18M1 4.600h18M1 8.200h18M1 11.800h18M1 15.400h18" stroke="#666" />
      </>
    ),
  },
  {
    name: 'Viewports',
    menu: 'gap-0.5',
    icon: (
      <>
        <rect x="1" y="2" width="18" height="16" rx="1" fill="#e9f0fa" stroke="#44536b" strokeWidth="1.300" />
        <path d="M3 4h5.500v4.500H3zM11.500 4H17v4.500h-5.500zM3 11.500h5.500V16H3zM11.500 11.500H17V16h-5.500z" fill="#9dbbe6" stroke="#5b7fb5" />
        <path d="M10 2v16M1 10h18" stroke="#44536b" strokeWidth="1.200" />
      </>
    ),
  },
]

function NavBar() {
  return (
    <div className="flex items-center w-[296px] h-[30px] pl-1 bg-[#f1f1f1]">
      {NAV_ITEMS.map((item) => (
        <button key={item.name} aria-label={item.name} className={`flex items-center ${item.menu ? `${item.menu} mr-2` : 'mr-3'}`}>
          {item.look ? <LookIcon size="w-5 h-5" /> : <Icon size="w-5 h-5" box="0 0 20 20">{item.icon}</Icon>}
          {item.menu && <Caret />}
        </button>
      ))}
    </div>
  )
}

function Viewport() {
  return (
    <main className="relative flex-1 grid grid-cols-[1fr_auto_1fr] min-h-[760px] overflow-hidden">
      <Sketch />
      <div className="relative flex flex-col justify-between w-[375px] ml-[5px] pt-[5px] pb-1.5">
        <Browser />
        <Comments />
      </div>
      <div className="relative self-end pb-[5px]">
        <NavBar />
      </div>
      <div className="relative flex flex-col items-end pt-2.5 pr-1">
        <div className="mr-[11px] mb-[26px] h-[100px]"><ViewCube /></div>
        <SketchPalette />
        <div className="mt-auto mb-[11px] mr-3 flex items-center gap-[15px]">
          <button aria-label="Warnings"><WarningTriangle size="w-5 h-[18px]" /></button>
          <button aria-label="Autodesk assistant">
            <Icon size="w-[18px] h-[18px]" box="0 0 18 18">
              <path d="M9 0a9 9 0 019 9v9H9A9 9 0 119 0z" fill="#111" />
              <path d="M2.500 10c3-4 6-5 12.500-4.500V12l-3-2.500C9 9 7.500 11 5 13.500" stroke="#fff" strokeWidth="1.700" />
            </Icon>
          </button>
        </div>
        <Notification />
      </div>
    </main>
  )
}

// ========================
//  Timeline
// ========================

const PLAYBACK = [
  { name: 'Go to start', d: 'M1 1h2.500v18H1zM16 1v18L4 10z' },
  { name: 'Step back', d: 'M13 2v16L1 10zM13.500 6h3v8h-3z' },
  { name: 'Play', d: 'M2 0l15 10L2 20z' },
  { name: 'Step forward', d: 'M5 2v16l12-8zM1.500 6h3v8h-3z' },
  { name: 'Go to end', d: 'M14.500 1H17v18h-2.500zM2 1v18l12-9z' },
]

const sketchFeature = (
  <>
    <path d="M4 2h10M2 4v11M16.500 4v6M4 17h6" stroke="#444" strokeWidth="1.200" />
    <path d="M0 0h4v4H0zM15 0h4v4h-4zM0 15h4v4H0z" fill={BLUE} />
    <path d="M11 20l1.500-4L18 11.500l2.500 3L15 19z" fill="#f6b95a" />
    <circle cx="19" cy="12" r="2.200" fill="#e2552e" />
  </>
)

const FEATURES = [
  { name: 'Sketch1', icon: sketchFeature },
  {
    name: 'Extrude1',
    icon: (
      <>
        <path d="M0 16l2 4h11l3-4" fill="#e4e4e4" stroke="#666" />
        <path d="M0 4l3-3.500h13V13l-3 4H0z" fill="#4f9fdc" />
        <path d="M0 4h13v13H0z" fill="#6db5ea" />
        <path d="M18.500 17V5" stroke="#222" strokeWidth="1.300" />
        <path d="M18.500 1l2.500 5h-5z" fill="#222" />
      </>
    ),
  },
  { name: 'Sketch2', icon: sketchFeature },
  {
    name: 'Revolve1',
    icon: (
      <>
        <path d="M2 4c5-3 11-3 16 0" stroke="#333" strokeWidth="1.400" />
        <path d="M0 8c6-4 14-4 20 0v8c-2 2-4 2-5 0-2-2-7-2-9 0-3 0-5-1-6-3z" fill="#58a6e0" />
        <path d="M0 8c6-4 14-4 20 0l-4 3c-4-1.500-8-1.500-11 0z" fill="#8bc4ef" />
        <path d="M16.500 11l3.500-2v7l-3 2z" fill="#eee" stroke="#555" />
      </>
    ),
  },
  {
    name: 'Fillet1',
    icon: (
      <>
        <path d="M1 19V6c1-3 4-5 8-5 6 1 10 5 10.500 12L16 19z" fill="#ececec" stroke="#666" strokeWidth="1.300" />
        <path d="M9 1c6 0 10 5 10.500 11L16 15c-1-6-3-8-8-11z" fill="#4f9fdc" />
      </>
    ),
  },
  {
    name: 'Plane1',
    icon: (
      <>
        <path d="M1 19V8c0-4 2-6 6-7v12l-3 3z" fill="#ececec" stroke="#666" strokeWidth="1.300" />
        <path d="M7 4l6-3.500V15l-6 4.500z" fill="#43a868" />
        <path d="M14 4l6-3.500V15l-6 4.500z" fill="#dd8f5e" />
      </>
    ),
  },
  { name: 'Sketch3', icon: sketchFeature },
]

function Timeline() {
  return (
    <footer className="flex items-start h-[67px] pl-1.5 pr-4 bg-[#f1f1f1] border-t-2 border-[#d6d6d6]">
      <div className="flex pt-[19px]">
        {PLAYBACK.map((b) => (
          <button key={b.name} aria-label={b.name} className="w-[31px] flex justify-center">
            <Icon size="w-[18px] h-5" box="0 0 18 20"><path d={b.d} fill="#3f3f3f" /></Icon>
          </button>
        ))}
      </div>
      <div className="ml-4 pt-[17px]">
        <div className="flex">
          {FEATURES.map((f) => (
            <button key={f.name} aria-label={f.name} className="w-[30px] flex justify-center">
              <Icon size="w-[21px] h-[21px]" box="0 0 21 21">{f.icon}</Icon>
            </button>
          ))}
        </div>
        <svg className="w-[210px] h-2.5 mt-1" viewBox="0 0 210 10" fill="none" aria-hidden="true">
          <path d="M17 0v7h179V0M46 0v7M76 0v7M106 0v7M136 0v7M166 0v7" stroke="#c4c4c4" strokeWidth="2" />
        </svg>
      </div>
      <button aria-label="Timeline marker" className="-ml-2 pt-[10px] relative">
        <Icon size="w-4 h-10" box="0 0 16 40">
          <path d="M0 0h16v5l-6 6H6L0 5z" fill="#5a5a5a" />
          <path d="M8 8v32" stroke="#5a5a5a" strokeWidth="2.500" />
        </Icon>
      </button>
      <button aria-label="Timeline settings" className="ml-auto mt-[19px]">
        <Icon size="w-5 h-5" box="0 0 20 20">{TREE_ICONS.gear}</Icon>
      </button>
    </footer>
  )
}

export default function App() {
  return (
    <div className="min-h-screen flex flex-col bg-[#f1f1f1]">
      <TitleBar />
      <DocumentBar />
      <Ribbon />
      <Viewport />
      <Timeline />
    </div>
  )
}
